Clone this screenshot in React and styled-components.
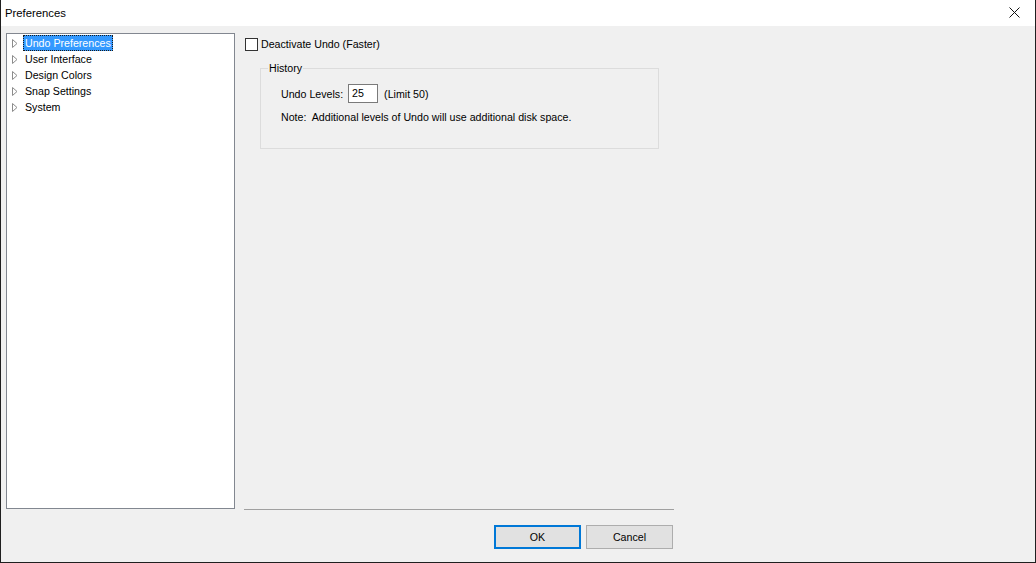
import React from "react";
import styled, { createGlobalStyle } from "styled-components";

const Global = createGlobalStyle`
  html, body { margin: 0; padding: 0; background: #f0f0f0; }
  body { font-family: "Liberation Sans", Arial, sans-serif; font-size: 10.65px; color: #000; }
  * { box-sizing: border-box; }
`;

const Window = styled.div`
  width: 1036px;
  height: 563px;
  display: flex;
  flex-direction: column;
  background: #f0f0f0;
  border: 1px solid #1f1f1f;
  border-top: none;
  overflow: hidden;
`;

const TitleBar = styled.div`
  height: 26px;
  flex: none;
  background: #fff;
  display: flex;
  align-items: center;
  justify-content: space-between;
  padding: 0 0 1px 4px;
  font-size: 11.3px;
`;

const CloseButton = styled.div`
  width: 46px;
  height: 25px;
  display: flex;
  align-items: center;
  justify-content: center;
  margin-right: -2px;
`;

const Body = styled.div`
  display: grid;
  grid-template-columns: 229px 430px;
  grid-template-rows: 476px auto;
  column-gap: 9px;
  padding: 7px 0 0 5px;
`;

const Tree = styled.div`
  grid-row: 1;
  grid-column: 1;
  background: #fff;
  border: 1px solid #828790;
  padding: 1px 0 0 5px;
  display: flex;
  flex-direction: column;
`;

const TreeRow = styled.div`
  display: flex;
  align-items: center;
  height: 16px;
`;

const Expander = styled.svg`
  width: 6px;
  height: 9px;
  flex: none;
  margin-right: 5px;
`;

const TreeLabel = styled.span`
  height: 16px;
  line-height: 14px;
  padding: 0 1px;
  border: 1px solid ${(p) => (p.$selected ? "#1a1a1a" : "transparent")};
  border-style: ${(p) => (p.$selected ? "dotted" : "solid")};
  background: ${(p) => (p.$selected ? "#3399ff" : "transparent")};
  color: ${(p) => (p.$selected ? "#fff" : "#000")};
  white-space: nowrap;
`;

const Content = styled.div`
  grid-row: 1;
  grid-column: 2;
  padding: 4px 0 0 1px;
  display: flex;
  flex-direction: column;
  border-bottom: 1px solid #a0a0a0;
  height: 477px;
`;

const CheckRow = styled.label`
  display: flex;
  align-items: center;
  height: 14px;
  gap: 3px;
`;

const CheckBox = styled.span`
  width: 13px;
  height: 13px;
  border: 1px solid #333;
  background: #fff;
  flex: none;
`;

const GroupBox = styled.div`
  position: relative;
  margin: 17px 0 0 15px;
  width: 399px;
  height: 81px;
  border: 1px solid #dcdcdc;
  padding: 15px 0 0 20px;
  display: flex;
  flex-direction: column;
`;

const Legend = styled.span`
  position: absolute;
  top: -7px;
  left: 7px;
  padding: 0 1px;
  background: #f0f0f0;
  line-height: 13px;
`;

const FieldRow = styled.div`
  display: flex;
  align-items: center;
  height: 19px;
`;

const NumberInput = styled.div`
  width: 30px;
  height: 19px;
  margin: 0 6px 0 5px;
  background: #fff;
  border: 1px solid #7a7a7a;
  padding-left: 3px;
  line-height: 17px;
`;

const Note = styled.div`
  margin-top: 8px;
  line-height: 13px;
`;

const ButtonRow = styled.div`
  grid-row: 2;
  grid-column: 2;
  display: flex;
  justify-content: flex-end;
  gap: 5px;
  padding: 16px 1px 0 0;
`;

const Button = styled.button`
  width: 87px;
  height: 24px;
  font: inherit;
  color: #000;
  background: #e1e1e1;
  border: ${(p) => (p.$default ? "2px solid #0078d7" : "1px solid #adadad")};
  padding: 0;
`;

const items = ["Undo Preferences", "User Interface", "Design Colors", "Snap Settings", "System"];

export default function App() {
  return (
    <>
      <Global />
      <Window>
        <TitleBar>
          <span>Preferences</span>
          <CloseButton>
            <svg width="11" height="11" viewBox="0 0 11 11">
              <path d="M0.5 0.5 L10.5 10.5 M10.5 0.5 L0.5 10.5" stroke="#111" strokeWidth="1" fill="none" />
            </svg>
          </CloseButton>
        </TitleBar>
        <Body>
          <Tree>
            {items.map((t, i) => (
              <TreeRow key={t}>
                <Expander viewBox="0 0 6 9">
                  <path d="M0.5 0.5 L5 4.5 L0.5 8.5 Z" stroke="#8c8c8c" strokeWidth="1" fill="#fff" />
                </Expander>
                <TreeLabel $selected={i === 0}>{t}</TreeLabel>
              </TreeRow>
            ))}
          </Tree>
          <Content>
            <CheckRow>
              <CheckBox />
              <span>Deactivate Undo (Faster)</span>
            </CheckRow>
            <GroupBox>
              <Legend>History</Legend>
              <FieldRow>
                <span>Undo Levels:</span>
                <NumberInput>25</NumberInput>
                <span>(Limit 50)</span>
              </FieldRow>
              <Note>Note:&nbsp; Additional levels of Undo will use additional disk space.</Note>
            </GroupBox>
          </Content>
          <ButtonRow>
            <Button $default>OK</Button>
            <Button>Cancel</Button>
          </ButtonRow>
        </Body>
      </Window>
    </>
  );
}
